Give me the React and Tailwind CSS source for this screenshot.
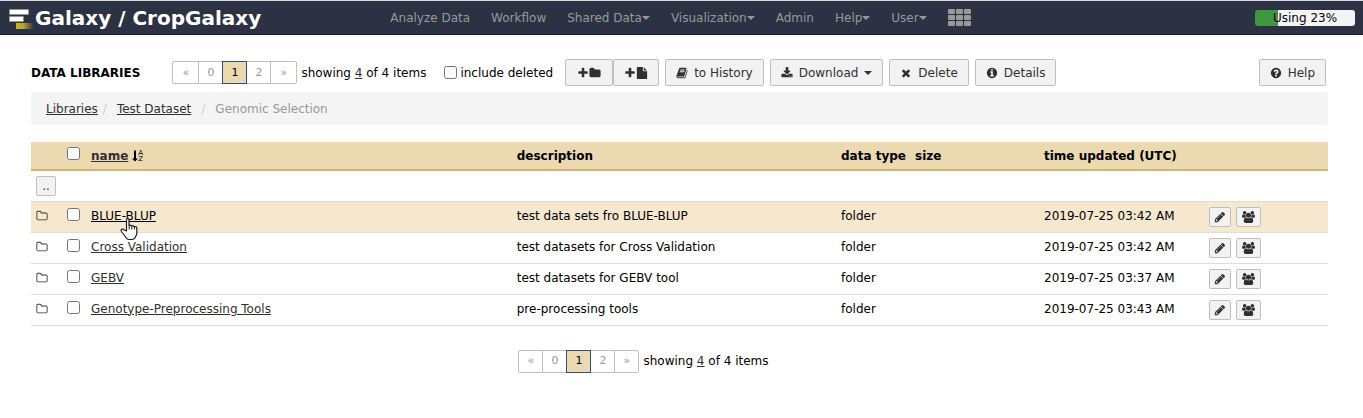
import React from "react";

const DISC =
  "zm384 192q0 209-103 385.5t-279.5 279.5-385.5 103-385.5-103-279.5-279.5-103-385.5 103-385.5 279.5-279.5 385.5-103 385.5 103 279.5 279.5 103 385.5z";

const PATHS = {
  plus: "M1600 736v192q0 40-28 68t-68 28h-416v416q0 40-28 68t-68 28h-192q-40 0-68-28t-28-68v-416h-416q-40 0-68-28t-28-68v-192q0-40 28-68t68-28h416v-416q0-40 28-68t68-28h192q40 0 68 28t28 68v416h416q40 0 68 28t28 68z",
  folder:
    "M1728 608v704q0 92-66 158t-158 66h-1216q-92 0-158-66t-66-158v-960q0-92 66-158t158-66h320q92 0 158 66t66 158v32h672q92 0 158 66t66 158z",
  folderOpen:
    "M1600 1312v-704q0-40-28-68t-68-28h-704q-40 0-68-28t-28-68v-64q0-40-28-68t-68-28h-320q-40 0-68 28t-28 68v960q0 40 28 68t68 28h1216q40 0 68-28t28-68zm128-704v704q0 92-66 158t-158 66h-1216q-92 0-158-66t-66-158v-960q0-92 66-158t158-66h320q92 0 158 66t66 158v32h672q92 0 158 66t66 158z",
  file: "M1152 512v-472q22 14 36 28l408 408q14 14 28 36h-472zm-128 32q0 40 28 68t68 28h544v1056q0 40-28 68t-68 28h-1344q-40 0-68-28t-28-68v-1600q0-40 28-68t68-28h800v544z",
  times:
    "M1490 1322q0 40-28 68l-136 136q-28 28-68 28t-68-28l-294-294-294 294q-28 28-68 28t-68-28l-136-136q-28-28-28-68t28-68l294-294-294-294q-28-28-28-68t28-68l136-136q28-28 68-28t68 28l294 294 294-294q28-28 68-28t68 28l136 136q28 28 28 68t-28 68l-294 294 294 294q28 28 28 68z",
  info: "M1152 1376v-160q0-14-9-23t-23-9h-96v-512q0-14-9-23t-23-9h-320q-14 0-23 9t-9 23v160q0 14 9 23t23 9h96v320h-96q-14 0-23 9t-9 23v160q0 14 9 23t23 9h448q14 0 23-9t9-23zm-128-896v-160q0-14-9-23t-23-9h-192q-14 0-23 9t-9 23v160q0 14 9 23t23 9h192q14 0 23-9t9-23zm640 416q0 209-103 385.5t-279.5 279.5-385.5 103-385.5-103-279.5-279.5-103-385.5 103-385.5 279.5-279.5 385.5-103 385.5 103 279.5 279.5 103 385.5z",
  question:
    "M1024 1376v-192q0-14-9-23t-23-9h-192q-14 0-23 9t-9 23v192q0 14 9 23t23 9h192q14 0 23-9t9-23zm256-672q0-88-55.5-163t-138.5-116-170-41q-243 0-371 213-15 24 8 42l132 100q7 6 19 6 16 0 25-12 53-68 86-92 34-24 86-24 48 0 85.5 26t37.5 59q0 38-20 61t-68 45q-63 28-115.5 86.5t-52.5 125.5v36q0 14 9 23t23 9h192q14 0 23-9t9-23q0-19 21.5-49.5t54.5-49.5q32-18 49-28.5t46-35 44.5-48 28-60.5 12.5-81" +
    DISC,
  download:
    "M1344 1344q0-26-19-45t-45-19-45 19-19 45 19 45 45 19 45-19 19-45zm256 0q0-26-19-45t-45-19-45 19-19 45 19 45 45 19 45-19 19-45zm128-224v320q0 40-28 68t-68 28h-1472q-40 0-68-28t-28-68v-320q0-40 28-68t68-28h465l135 136q58 56 136 56t136-56l136-136h464q40 0 68 28t28 68zm-325-569q17 41-14 70l-448 448q-18 19-45 19t-45-19l-448-448q-31-29-14-70 17-39 59-39h256v-448q0-26 19-45t45-19h256q26 0 45 19t19 45v448h256q42 0 59 39z",
  book: "M1703 478q40 57 18 129l-275 906q-19 64-76.5 107.5t-122.5 43.5h-923q-77 0-148.5-53.5t-99.5-131.5q-24-67-2-127 0-4 3-27t4-37q1-8-3-21.5t-3-19.5q2-11 8-21t16.5-23.5 16.5-23.5q23-38 45-91.5t30-91.5q3-10 .5-30t-.5-28q3-11 17-28t17-23q21-36 42-92t25-90q1-9-2.5-32t.5-28q4-13 22-30.5t22-22.5q19-26 42.5-84.5t27.5-96.5q1-8-3-25.5t-2-26.5q2-8 9-18t18-23 17-21q8-12 16.5-30.5t15-35 16-36 19.5-32 26.5-23.5 36-11.5 47.5 5.500l-1 3q38-9 51-9h761q74 0 114 56t18 130l-274 906q-36 119-71.5 153.5t-128.5 34.5h-869q-27 0-38 15-11 16-1 43 24 70 144 70h923q29 0 56-15.5t35-41.5l300-987q7-22 5-57 38 15 59 43zm-1064 2q-4 13 2 22.5t20 9.5h608q13 0 25.5-9.5t16.5-22.5l21-64q4-13-2-22.5t-20-9.5h-608q-13 0-25.5 9.5t-16.5 22.5zm-83 256q-4 13 2 22.5t20 9.5h608q13 0 25.5-9.5t16.5-22.5l21-64q4-13-2-22.5t-20-9.5h-608q-13 0-25.5 9.5t-16.5 22.5z",
  pencil:
    "M491 1536l91-91-235-235-91 91v107h128v128h107zm523-928q0-22-22-22-10 0-17 7l-542 542q-7 7-7 17 0 22 22 22 10 0 17-7l542-542q7-7 7-17zm-54-192l416 416-832 832h-416v-416zm683 96q0 53-37 90l-166 166-416-416 166-165q36-38 90-38 53 0 91 38l235 234q37 39 37 91z",
  users:
    "M593 896q-162 5-265 128h-134q-82 0-138-40.5t-56-118.5q0-353 124-353 6 0 43.5 21t97.5 42.5 119 21.5q67 0 133-23-5 37-5 66 0 139 81 256zm1071 637q0 120-73 189.5t-194 69.5h-874q-121 0-194-69.5t-73-189.5q0-53 3.5-103.5t14-109 26.5-108.5 43-97.5 62-81 85.5-53.5 111.5-20q10 0 43 21.5t73 48 107 48 135 21.5 135-21.5 107-48 73-48 43-21.5q61 0 111.5 20t85.5 53.5 62 81 43 97.5 26.5 108.5 14 109 3.5 103.5zm-1024-1277q0 106-75 181t-181 75-181-75-75-181 75-181 181-75 181 75 75 181zm704 384q0 159-112.5 271.5t-271.5 112.5-271.5-112.5-112.5-271.5 112.5-271.5 271.5-112.5 271.5 112.5 112.5 271.5zm576 225q0 78-56 118.5t-138 40.5h-134q-103-123-265-128 81-117 81-256 0-29-5-66 66 23 133 23 59 0 119-21.5t97.5-42.5 43.5-21q124 0 124 353zm-128-609q0 106-75 181t-181 75-181-75-75-181 75-181 181-75 181 75 75 181z",
};

function Icon({ name, className = "size-3" }) {
  return (
    <svg
      aria-hidden="true"
      viewBox={name === "users" ? "0 0 1920 1792" : "0 0 1792 1792"}
      fill="currentColor"
      className={"shrink-0 " + className}
    >
      <path d={PATHS[name]} />
    </svg>
  );
}

function Caret() {
  return (
    <svg aria-hidden="true" viewBox="0 0 8 4" fill="currentColor" className="h-1 w-2 shrink-0">
      <path d="M0 0h8L4 4z" />
    </svg>
  );
}

function SortIcon() {
  return (
    <span aria-hidden="true" className="flex items-center">
      <svg viewBox="0 0 6 12" fill="currentColor" className="h-3 w-[6px] shrink-0">
        <path d="M2 0.500h2v8h2L3 11.500 0 8.500h2z" />
      </svg>
      <span className="flex flex-col text-[7px] leading-[6px] font-normal">
        <span>A</span>
        <span>Z</span>
      </span>
    </span>
  );
}

function Logo() {
  return (
    <svg aria-hidden="true" viewBox="0 0 26 22" className="h-[22px] w-[26px] shrink-0">
      <defs>
        <linearGradient id="tail" x1="0" x2="1">
          <stop offset="0" stopColor="#c9b41f" />
          <stop offset="0.4" stopColor="#b8a728" />
          <stop offset="1" stopColor="#2c3143" />
        </linearGradient>
      </defs>
      <path fill="#fff" stroke="#8d909b" strokeWidth="0.6" d="M0.500 2.500h19v5h-19zM0.500 9.500h14v5h-14z" />
      <path fill="url(#tail)" d="M7 16h18v6H7z" />
    </svg>
  );
}

const NAV = [
  ["Analyze Data", false],
  ["Workflow", false],
  ["Shared Data", true],
  ["Visualization", true],
  ["Admin", false],
  ["Help", true],
  ["User", true],
];

function Navbar() {
  return (
    <header className="flex h-[35px] items-center justify-between border-t border-b border-t-[#d5dade] border-b-[#161924] bg-[#2c3143] pr-2 pl-[9px]">
      <a href="#home" className="flex flex-1 items-center whitespace-nowrap text-xl leading-6 font-bold text-white">
        <Logo />
        Galaxy / CropGalaxy
      </a>
      <nav className="flex items-center gap-[21px] whitespace-nowrap pr-[3px] text-[#999]">
        {NAV.map(([label, menu]) => (
          <a key={label} href="#nav" className="flex items-center">
            {label}
            {menu && <Caret />}
          </a>
        ))}
        <a href="#apps" aria-label="Scratchbook">
          <svg aria-hidden="true" viewBox="0 0 23 17" fill="currentColor" className="h-[17px] w-[23px]">
            {[0, 6, 12].map((y) =>
              [0, 8, 16].map((x) => <rect key={x + "-" + y} x={x} y={y} width="7" height="5" rx="1" />)
            )}
          </svg>
        </a>
      </nav>
      <div className="flex flex-1 justify-end">
        <div className="h-4 w-[100px] rounded-[3px] bg-[linear-gradient(90deg,#3f9640_23%,#f4f4f4_23%)] text-center leading-4 text-black">
          Using 23%
        </div>
      </div>
    </header>
  );
}

const BTN = "flex items-center rounded-[2px] border border-[#bfbfbf] bg-[#f2f2f2] text-[#303030]";

function ToolButton({ icon, children }) {
  return (
    <button type="button" className={BTN + " h-[27px] gap-[6px] px-[10px] whitespace-nowrap"}>
      <Icon name={icon} />
      {children}
    </button>
  );
}

function Pager({ wide }) {
  const edge = wide ? "w-[27px]" : "w-[25px]";
  const box = "h-[23px] border border-[#bfbfbf] bg-white text-center text-[11px] leading-5 text-[#999]";
  return (
    <div className="flex items-center gap-1 whitespace-nowrap">
      <div className="flex">
        <button type="button" className={box + " rounded-l-[2px] " + edge}>«</button>
        <button type="button" className={box + " -ml-px w-[25px]"}>0</button>
        <button
          type="button"
          aria-current="page"
          className="relative -ml-px h-[23px] w-[25px] border border-[#25537b] bg-[#ebd9b2] text-center text-[11px] leading-5 text-black"
        >
          1
        </button>
        <button type="button" className={box + " -ml-px w-[25px]"}>2</button>
        <button type="button" className={box + " -ml-px rounded-r-[2px] " + edge}>»</button>
      </div>
      <span>
        showing <a href="#size" className="text-[#303030] underline">4</a> of 4 items
      </span>
    </div>
  );
}

const ROWS = [
  ["BLUE-BLUP", "test data sets fro BLUE-BLUP", "2019-07-25 03:42 AM"],
  ["Cross Validation", "test datasets for Cross Validation", "2019-07-25 03:42 AM"],
  ["GEBV", "test datasets for GEBV tool", "2019-07-25 03:37 AM"],
  ["Genotype-Preprocessing Tools", "pre-processing tools", "2019-07-25 03:43 AM"],
];

function Pointer() {
  return (
    <svg aria-hidden="true" viewBox="0 0 18 24" className="absolute top-[10px] left-[29px] h-6 w-[18px]">
      <path
        fill="#fff"
        stroke="#1a1a24"
        strokeWidth="1.2"
        strokeLinejoin="round"
        d="M6.500 14V3q0-1.500 1.300-1.500T9 3v5.500q2-.8 2.600.6 2-.6 2.600.6 2.600-.5 2.600 1.500v4.800q0 2-1.400 4-.8 2.500-2.800 2.500H9q-2 0-3-2l-4.500-6q-1-1.500.3-2.200 1.200-.5 2.500.7z"
      />
      <path fill="none" stroke="#1a1a24" d="M9.200 8.500v4M11.800 9.500v3M14.400 10v2.500" />
    </svg>
  );
}

function FolderTable() {
  return (
    <table className="w-full table-fixed border-collapse text-left [&_td]:p-0 [&_td]:px-[5px] [&_th]:p-0 [&_th]:px-[5px]">
      <colgroup>
        <col className="w-[31px]" />
        <col className="w-6" />
        <col />
        <col className="w-[25%]" />
        <col className="w-[74px]" />
        <col className="w-[129px]" />
        <col className="w-[165px]" />
        <col className="w-[124px]" />
      </colgroup>
      <thead>
        <tr className="h-7 border-b-2 border-[#d8b365] bg-[#ebd9b2] whitespace-nowrap">
          <th />
          <th>
            <input type="checkbox" aria-label="Select all" className="mb-1 block size-[13px]" />
          </th>
          <th>
            <div className="flex items-center gap-1">
              <a href="#sort" className="text-[#303030] underline">name</a>
              <SortIcon />
            </div>
          </th>
          <th>description</th>
          <th>data type</th>
          <th>size</th>
          <th>time updated (UTC)</th>
          <th />
        </tr>
      </thead>
      <tbody>
        <tr className="h-[31px] border-b border-[#dcdcdc]">
          <td colSpan={8}>
            <button type="button" className={BTN + " h-5 w-5 justify-center text-[#23237a]"}>..</button>
          </td>
        </tr>
        {ROWS.map(([name, description, time], i) => (
          <tr key={name} className={"h-[31px] border-b border-[#dcdcdc] " + (i === 0 ? "bg-[#f5e8cf]" : "")}>
            <td>
              <Icon name="folderOpen" className="mb-[2px] size-3 text-[#303030]" />
            </td>
            <td>
              <input type="checkbox" aria-label={"Select " + name} className="mb-1 block size-[13px]" />
            </td>
            <td>
              <span className="relative block pb-[2px]">
                <a href="#folder" className={"underline " + (i === 0 ? "text-black" : "text-[#303030]")}>{name}</a>
                {i === 0 && <Pointer />}
              </span>
            </td>
            <td className="pb-[2px]!">{description}</td>
            <td className="pb-[2px]!">folder</td>
            <td />
            <td className="pb-[2px]!">{time}</td>
            <td>
              <div className="flex gap-[5px]">
                <button type="button" aria-label={"Edit " + name} className={BTN + " h-5 w-[22px] justify-center"}>
                  <Icon name="pencil" />
                </button>
                <button type="button" aria-label={"Permissions of " + name} className={BTN + " h-5 w-[25px] justify-center"}>
                  <Icon name="users" className="h-3 w-[13px]" />
                </button>
              </div>
            </td>
          </tr>
        ))}
      </tbody>
    </table>
  );
}

export default function App() {
  return (
    <div className="min-h-screen bg-white font-['DejaVu_Sans',sans-serif] text-xs leading-[18px] text-black">
      <Navbar />
      <main className="pt-6 pr-[35px] pl-[31px]">
        <div className="flex h-[27px] items-center">
          <h1 className="mr-8 font-bold whitespace-nowrap">DATA LIBRARIES</h1>
          <Pager wide />
          <label className="mr-3 ml-[18px] flex items-center gap-[3px] whitespace-nowrap">
            <input type="checkbox" className="size-[13px]" />
            include deleted
          </label>
          <div className="mr-[6px] flex">
            <button type="button" aria-label="Create folder" className={BTN + " h-[27px] w-12 justify-center"}>
              <Icon name="plus" />
              <Icon name="folder" />
            </button>
            <button type="button" aria-label="Add datasets" className={BTN + " h-[27px] w-[46px] justify-center"}>
              <Icon name="plus" />
              <Icon name="file" />
            </button>
          </div>
          <div className="flex gap-[6px]">
            <ToolButton icon="book">to History</ToolButton>
            <ToolButton icon="download">
              Download
              <Caret />
            </ToolButton>
            <ToolButton icon="times">Delete</ToolButton>
            <ToolButton icon="info">Details</ToolButton>
          </div>
          <div className="mr-[2px] ml-auto">
            <ToolButton icon="question">Help</ToolButton>
          </div>
        </div>
        <nav aria-label="Breadcrumb" className="mt-[6px] flex h-[33px] items-center rounded-sm bg-[#f4f4f4] px-[15px] text-[#999]">
          <a href="#libraries" className="text-[#303030] underline">Libraries</a>
          <span className="mr-[10px] ml-[5px] text-[#ccc]">/</span>
          <a href="#dataset" className="text-[#303030] underline">Test Dataset</a>
          <span className="mx-[10px] text-[#ccc]">/</span>
          <span>Genomic Selection</span>
        </nav>
        <div className="mt-[17px]">
          <FolderTable />
        </div>
        <div className="mt-6 flex justify-center pr-[72px]">
          <Pager />
        </div>
      </main>
    </div>
  );
}
